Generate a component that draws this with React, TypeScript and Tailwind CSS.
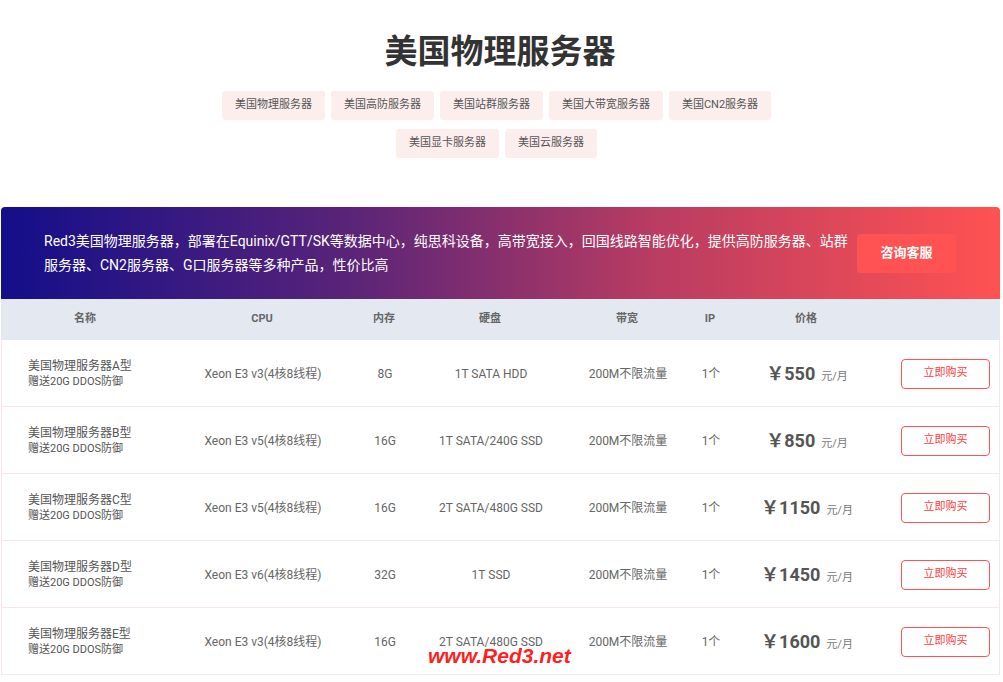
const tags = [
  '美国物理服务器',
  '美国高防服务器',
  '美国站群服务器',
  '美国大带宽服务器',
  '美国CN2服务器',
  '美国显卡服务器',
  '美国云服务器',
];

const rows = [
  ['A', 'Xeon E3 v3(4核8线程)', '8G', '1T SATA HDD', '550'],
  ['B', 'Xeon E3 v5(4核8线程)', '16G', '1T SATA/240G SSD', '850'],
  ['C', 'Xeon E3 v5(4核8线程)', '16G', '2T SATA/480G SSD', '1150'],
  ['D', 'Xeon E3 v6(4核8线程)', '32G', '1T SSD', '1450'],
  ['E', 'Xeon E3 v3(4核8线程)', '16G', '2T SATA/480G SSD', '1600'],
];

const cols = 'grid grid-cols-[168px_186px_58px_154px_120px_46px_146px_1fr] items-center';

export default function App() {
  return (
    <div className="relative min-h-[682px] bg-white font-['Roboto','Noto_Sans_CJK_SC',sans-serif] text-[#666]">
      <div className="flex flex-col items-center pt-[30px]">
        <h1 className="pr-[3px] text-[33px] font-bold leading-[44px] text-[#333]">美国物理服务器</h1>
        <div className="mt-[17px] flex w-[600px] flex-wrap justify-center gap-x-[6px] gap-y-[9px] pr-[10px]">
          {tags.map((t) => (
            <span
              key={t}
              className="flex h-[29px] items-center rounded-[3px] bg-[#fdeeee] px-[13px] text-[11px] text-[#555]"
            >
              {t}
            </span>
          ))}
        </div>
      </div>

      <div className="mx-[1px] mt-[49px] w-[999px]">
        <div className="flex h-[92px] items-center justify-between rounded-t-[4px] bg-[linear-gradient(90deg,#130e8a_0%,#5a2478_35%,#b83c62_65%,#ff5252_100%)] pl-[43px] pr-[44px]">
          <p className="w-[810px] text-[14px] leading-[24px] text-white">
            Red3美国物理服务器，部署在Equinix/GTT/SK等数据中心，纯思科设备，高带宽接入，回国线路智能优化，提供高防服务器、站群服务器、CN2服务器、G口服务器等多种产品，性价比高
          </p>
          <button className="flex h-[39px] w-[99px] items-center justify-center rounded-[4px] bg-[#ff5252] text-[13px] font-bold text-white">
            咨询客服
          </button>
        </div>

        <div className={`${cols} h-[41px] bg-[#e4e8f1] text-center text-[11px] font-bold text-[#666]`}>
          <span>名称</span>
          <span>CPU</span>
          <span>内存</span>
          <span>硬盘</span>
          <span>带宽</span>
          <span>IP</span>
          <span>价格</span>
          <span />
        </div>

        <div className="border-x border-[#fde4e8]">
          {rows.map(([t, cpu, mem, disk, price]) => (
            <div key={t} className={`${cols} h-[67px] border-b border-[#fde4e8] pt-[1px] text-center text-[12px]`}>
              <div className="pl-[26px] text-left leading-[15px]">
                <div className="text-[12px] text-[#555]">美国物理服务器{t}型</div>
                <div className="text-[11px] text-[#555]">赠送20G DDOS防御</div>
              </div>
              <span>{cpu}</span>
              <span>{mem}</span>
              <span>{disk}</span>
              <span>200M不限流量</span>
              <span>1个</span>
              <span className="flex items-baseline justify-center text-[#555]">
                <span className="text-[18px] font-bold">￥{price}</span>
                <span className="ml-[6px] text-[11px] text-[#777]">元/月</span>
              </span>
              <span className="flex justify-end pr-[9px]">
                <button className="h-[30px] w-[89px] rounded-[4px] border border-[#ff5252] text-[11px] text-[#ff4040]">
                  立即购买
                </button>
              </span>
            </div>
          ))}
        </div>
      </div>

      <div className="absolute left-[428px] top-[640px] text-[21px] font-bold italic text-[#ff1f1f] [font-family:'Liberation_Sans',sans-serif] [text-shadow:0_0_2px_#fff,0_0_2px_#fff]">
        www.Red3.net
      </div>
    </div>
  );
}
